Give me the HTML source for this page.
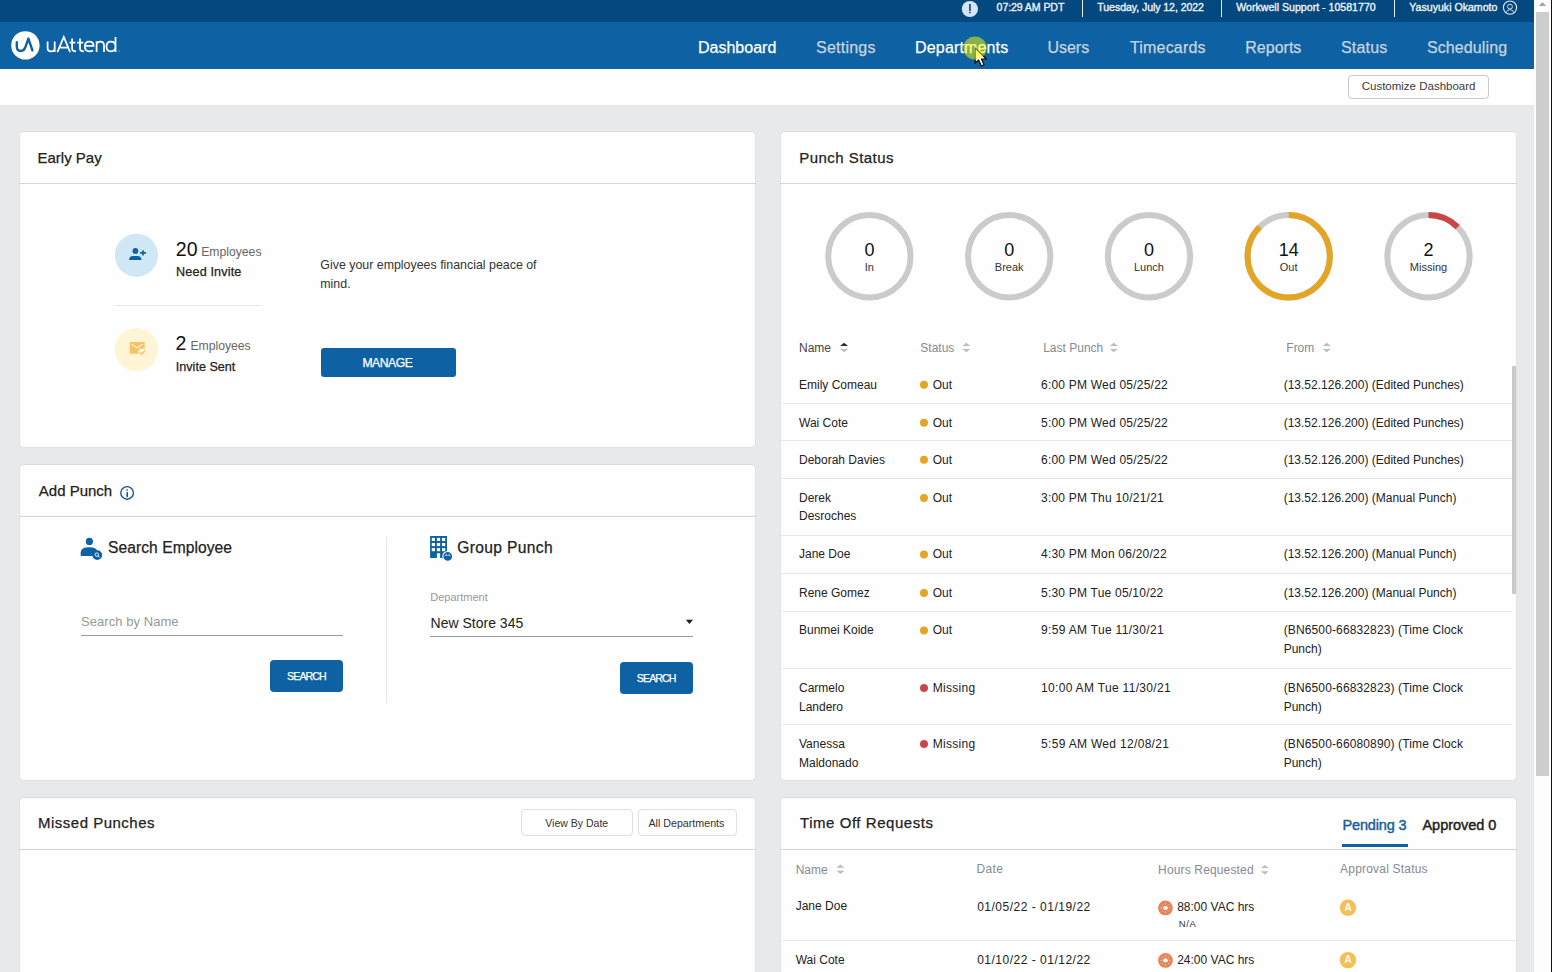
<!DOCTYPE html>
<html><head><meta charset="utf-8"><style>
*{box-sizing:border-box;margin:0;padding:0}
html,body{width:1552px;height:972px;overflow:hidden;background:#e8e9eb;font-family:"Liberation Sans",sans-serif;color:#222}
.t{position:absolute;white-space:nowrap}
.r{position:absolute}
svg{position:absolute;overflow:visible}
.card{position:absolute;background:#fefefe;border:1px solid #e1e2e4;border-top-color:#d9dadc;border-radius:5px}
.sm{-webkit-text-stroke:0.25px currentColor}
.sb{-webkit-text-stroke:0.45px currentColor}
.tbx{-webkit-text-stroke:0.35px currentColor}
</style></head><body>
<div class="r" style="left:0px;top:0px;width:1534px;height:22px;background:#03487e;"></div>
<div class="r" style="left:0px;top:22px;width:1534px;height:47px;background:#0e62a3;"></div>
<div class="r" style="left:0px;top:69px;width:1534px;height:36px;background:#fefefe;"></div>
<svg style="left:0;top:0" width="1" height="1"><circle cx="969.9" cy="9" r="8.1" fill="#d2e6f5"/><rect x="969" y="4" width="1.8" height="7.2" fill="#2b4c96"/><rect x="969" y="12" width="1.8" height="1.3" fill="#2b4c96"/></svg>
<div class="t tbx" style="left:996.60px;top:2.13px;font-size:10.6px;line-height:10.6px;color:#eef2f6;letter-spacing:-0.1px;">07:29 AM PDT</div>
<div class="r" style="left:1082px;top:0px;width:1px;height:17px;background:#e6ecf2;"></div>
<div class="t tbx" style="left:1097.30px;top:2.13px;font-size:10.6px;line-height:10.6px;color:#eef2f6;letter-spacing:-0.08px;">Tuesday, July 12, 2022</div>
<div class="r" style="left:1221px;top:0px;width:1px;height:17px;background:#e6ecf2;"></div>
<div class="t tbx" style="left:1236.30px;top:2.13px;font-size:10.6px;line-height:10.6px;color:#eef2f6;">Workwell Support - 10581770</div>
<div class="r" style="left:1394px;top:0px;width:1px;height:17px;background:#e6ecf2;"></div>
<div class="t tbx" style="left:1409.30px;top:2.13px;font-size:10.6px;line-height:10.6px;color:#eef2f6;">Yasuyuki Okamoto</div>
<svg style="left:0;top:0" width="1" height="1"><circle cx="1510" cy="7.6" r="6.6" fill="none" stroke="#e8eef5" stroke-width="1.1"/><circle cx="1510" cy="6.6" r="2.4" fill="none" stroke="#c9d9e8" stroke-width="1"/><path d="M1506.2 12.6 Q1507 9.6 1510 9.6 Q1513 9.6 1513.8 12.6" fill="none" stroke="#c9d9e8" stroke-width="1"/></svg>
<svg style="left:0;top:0" width="1" height="1"><circle cx="25.4" cy="45.4" r="14.2" fill="#fff"/><path d="M16.8 42.2 V46.6 Q16.8 51 20.8 51 Q24 51 25.4 47.2 L28.4 38.6 L32.4 50.4" fill="none" stroke="#0e62a3" stroke-width="2.4" stroke-linecap="round" stroke-linejoin="round"/></svg>
<svg style="left:0;top:0" width="1" height="1"><g fill="none" stroke="#fff" stroke-width="1.75"><path d="M47.6 41.6 V48.2 Q47.6 51.3 51.1 51.3 Q54.7 51.3 54.7 48.2 V41.6 M54.7 47 V52"/><path d="M57.4 52.1 L63.8 37 L70.1 52.1 M60.3 47.7 H67.3"/><path d="M72.1 38.6 V48.8 Q72.1 51.4 76 51.4 M69.5 42.6 H75.4"/><path d="M80 38.6 V48.8 Q80 51.4 83.9 51.4 M77.2 42.6 H83.3"/><path d="M84.9 45.9 H93.6 Q93.6 41.6 89.2 41.6 Q84.9 41.6 84.9 46.6 Q84.9 51.4 89.4 51.4 Q91.7 51.4 93 50.5"/><path d="M96.6 52.1 V45.5 Q96.6 41.6 100.3 41.6 Q104 41.6 104 45.5 V52.1 M96.6 41.2 V43.5"/><path d="M115.5 36.9 V52.1 M115.5 46.6 Q115.5 41.6 110.9 41.6 Q106.5 41.6 106.5 46.6 Q106.5 51.4 110.9 51.4 Q115.5 51.4 115.5 46.6"/></g><circle cx="119.1" cy="51" r="0.6" fill="#9fbfdf"/></svg>
<div class="t sm" style="left:698.00px;top:39.96px;font-size:16px;line-height:16px;color:#ffffff;">Dashboard</div>
<div class="t sm" style="left:816.10px;top:39.96px;font-size:16px;line-height:16px;color:#c8d4e0;letter-spacing:0.22px;">Settings</div>
<div class="t sm" style="left:915.10px;top:39.96px;font-size:16px;line-height:16px;color:#ffffff;letter-spacing:0.15px;">Departments</div>
<div class="t sm" style="left:1047.40px;top:39.96px;font-size:16px;line-height:16px;color:#c8d4e0;">Users</div>
<div class="t sm" style="left:1129.90px;top:39.96px;font-size:16px;line-height:16px;color:#c8d4e0;letter-spacing:0.2px;">Timecards</div>
<div class="t sm" style="left:1245.30px;top:39.96px;font-size:16px;line-height:16px;color:#c8d4e0;">Reports</div>
<div class="t sm" style="left:1341.00px;top:39.96px;font-size:16px;line-height:16px;color:#c8d4e0;letter-spacing:0.2px;">Status</div>
<div class="t sm" style="left:1427.00px;top:39.96px;font-size:16px;line-height:16px;color:#c8d4e0;letter-spacing:0.1px;">Scheduling</div>
<svg style="left:0;top:0" width="1" height="1"><path d="M975.2 48 L975.2 63.2 L978.6 60 L981.4 66 L984 64.8 L981.4 59 L986.4 59 Z" fill="#fff" stroke="#000" stroke-width="1.1" stroke-linejoin="round"/><circle cx="975" cy="48" r="11.6" fill="#ffff00" fill-opacity="0.5"/></svg>
<div class="r" style="left:1348px;top:75px;width:141px;height:24px;background:#fefefe;border:1px solid #c9c9c9;border-radius:4px;"></div>
<div class="t" style="left:1361.70px;top:81.37px;font-size:11.5px;line-height:11.5px;color:#3a3a3a;">Customize Dashboard</div>
<div class="card" style="left:19px;top:131px;width:737px;height:317px"></div>
<div class="r" style="left:19px;top:183px;width:737px;height:1px;background:#d4d5d7;"></div>
<div class="t sm" style="left:37.50px;top:150.20px;font-size:15px;line-height:15px;color:#222;">Early Pay</div>
<div class="card" style="left:19px;top:464px;width:737px;height:317px"></div>
<div class="r" style="left:19px;top:516px;width:737px;height:1px;background:#d4d5d7;"></div>
<div class="t sm" style="left:38.80px;top:483.40px;font-size:15px;line-height:15px;color:#222;">Add Punch</div>
<div class="card" style="left:19px;top:797px;width:737px;height:200px"></div>
<div class="r" style="left:19px;top:849px;width:737px;height:1px;background:#d4d5d7;"></div>
<div class="t sm" style="left:38.00px;top:815.10px;font-size:15px;line-height:15px;color:#222;letter-spacing:0.5px;">Missed Punches</div>
<div class="card" style="left:780px;top:131px;width:737px;height:650px"></div>
<div class="r" style="left:780px;top:183px;width:737px;height:1px;background:#d4d5d7;"></div>
<div class="t sm" style="left:799.30px;top:150.20px;font-size:15px;line-height:15px;color:#222;letter-spacing:0.45px;">Punch Status</div>
<div class="card" style="left:780px;top:797px;width:737px;height:200px"></div>
<div class="r" style="left:780px;top:849px;width:737px;height:1px;background:#d4d5d7;"></div>
<div class="t sm" style="left:800.00px;top:815.10px;font-size:15px;line-height:15px;color:#222;letter-spacing:0.55px;">Time Off Requests</div>
<svg style="left:0;top:0" width="1" height="1"><circle cx="136.4" cy="255.3" r="21.6" fill="#d0e7f6"/><circle cx="135.4" cy="250.9" r="2.9" fill="#0e62a3"/><path d="M129.2 260 V258.4 Q130 256 133 256 H137.6 Q140.6 256 141.5 259 V260 Z" fill="#0e62a3"/><path d="M143 250.2 V255.6 M140 252.9 H146" stroke="#0e62a3" stroke-width="1.7"/><circle cx="136.4" cy="349.7" r="21.6" fill="#fdf5d6"/><rect x="129.9" y="342" width="14.8" height="11.8" rx="0.5" fill="#f7c369"/><path d="M131.4 344.3 L137.2 347.9 L142.8 344.3" fill="none" stroke="#fdf5d6" stroke-width="1.1"/><circle cx="142.2" cy="352.6" r="4" fill="#fdf5d6"/><path d="M139.6 352.3 L141.2 354.2 L145.1 350.9" fill="none" stroke="#f7c369" stroke-width="1.5"/></svg>
<div class="t" style="left:175.80px;top:240.49px;font-size:19.5px;line-height:19.5px;color:#111;">20</div>
<div class="t" style="left:201.20px;top:245.67px;font-size:12.2px;line-height:12.2px;color:#666;">Employees</div>
<div class="t sm" style="left:176.10px;top:266.43px;font-size:12.6px;line-height:12.6px;color:#222;letter-spacing:0.15px;">Need Invite</div>
<div class="r" style="left:115px;top:305px;width:146px;height:1px;background:#e6e6e6;"></div>
<div class="t" style="left:175.50px;top:333.79px;font-size:19.5px;line-height:19.5px;color:#111;">2</div>
<div class="t" style="left:190.40px;top:339.97px;font-size:12.2px;line-height:12.2px;color:#666;">Employees</div>
<div class="t sm" style="left:175.80px;top:360.63px;font-size:12.6px;line-height:12.6px;color:#222;">Invite Sent</div>
<div class="t" style="left:320.30px;top:259.20px;font-size:12.4px;line-height:12.4px;color:#333;">Give your employees financial peace of</div>
<div class="t" style="left:320.30px;top:278.20px;font-size:12.4px;line-height:12.4px;color:#333;">mind.</div>
<div class="r" style="left:321px;top:348px;width:135px;height:29px;background:#0e62a3;border-radius:3px;"></div>
<div class="t sm" style="left:362.40px;top:356.77px;font-size:12.2px;line-height:12.2px;color:#fff;letter-spacing:-0.45px;">MANAGE</div>
<svg style="left:0;top:0" width="1" height="1"><circle cx="127.1" cy="492.9" r="6.3" fill="none" stroke="#1a5592" stroke-width="1.4"/><rect x="126.4" y="492" width="1.6" height="5.2" rx="0.6" fill="#0f57a0"/><rect x="126.4" y="489.2" width="1.6" height="1.6" rx="0.5" fill="#1a5c9c"/><circle cx="89.4" cy="541.4" r="3.6" fill="#0e62a3"/><path d="M80.7 556 V552.6 Q80.7 547.2 89.1 547.2 Q97.5 547.2 97.5 552.6 V556 Z" fill="#0e62a3"/><circle cx="97.3" cy="555.1" r="4.9" fill="#0e62a3"/><circle cx="96.8" cy="554.6" r="1.7" fill="none" stroke="#fefefe" stroke-width="0.9"/><path d="M98 555.8 L99.7 557.5" stroke="#fefefe" stroke-width="1"/></svg>
<div class="t sm" style="left:108.10px;top:540.49px;font-size:15.6px;line-height:15.6px;color:#222;letter-spacing:0.05px;">Search Employee</div>
<div class="t" style="left:81.10px;top:615.20px;font-size:13px;line-height:13px;color:#999;letter-spacing:0.05px;">Search by Name</div>
<div class="r" style="left:81px;top:635px;width:262px;height:1px;background:#9a9a9a;"></div>
<div class="r" style="left:270px;top:660px;width:73px;height:32px;background:#0e62a3;border-radius:4px;"></div>
<div class="t sm" style="left:287.10px;top:671.03px;font-size:10.6px;line-height:10.6px;color:#fff;letter-spacing:-0.9px;">SEARCH</div>
<div class="r" style="left:386px;top:537px;width:1px;height:166px;background:#e6e6e6;"></div>
<svg style="left:0;top:0" width="1" height="1"><path d="M430.1 536 H447 V557.9 H440.1 V553.3 H436.9 V557.9 H430.1 Z" fill="#0e62a3"/><rect x="431.8" y="537.9" width="3.2" height="3.1" fill="#fefefe"/><rect x="436.9" y="537.9" width="3.2" height="3.1" fill="#fefefe"/><rect x="442.0" y="537.9" width="3.2" height="3.1" fill="#fefefe"/><rect x="431.8" y="543.0" width="3.2" height="3.1" fill="#fefefe"/><rect x="436.9" y="543.0" width="3.2" height="3.1" fill="#fefefe"/><rect x="442.0" y="543.0" width="3.2" height="3.1" fill="#fefefe"/><rect x="431.8" y="548.1" width="3.2" height="3.1" fill="#fefefe"/><rect x="436.9" y="548.1" width="3.2" height="3.1" fill="#fefefe"/><rect x="442.0" y="548.1" width="3.2" height="3.1" fill="#fefefe"/><circle cx="447.7" cy="556.4" r="4.9" fill="#0e62a3" stroke="#fefefe" stroke-width="1.1"/><path d="M444.6 555.6 H450.6" stroke="#9fc0e0" stroke-width="0.9"/><circle cx="446.2" cy="554.2" r="0.7" fill="#b8d0e8"/><circle cx="449.2" cy="554.2" r="0.7" fill="#b8d0e8"/></svg>
<div class="t sm" style="left:457.30px;top:540.39px;font-size:15.6px;line-height:15.6px;color:#222;letter-spacing:0.35px;">Group Punch</div>
<div class="t" style="left:430.30px;top:591.79px;font-size:11px;line-height:11px;color:#999;">Department</div>
<div class="t" style="left:430.60px;top:616.35px;font-size:14px;line-height:14px;color:#222;">New Store 345</div>
<svg style="left:0;top:0" width="1" height="1"><path d="M685.8 619.8 H693 L689.4 623.9 Z" fill="#222"/></svg>
<div class="r" style="left:430px;top:636px;width:263px;height:1px;background:#9a9a9a;"></div>
<div class="r" style="left:620px;top:662px;width:73px;height:32px;background:#0e62a3;border-radius:4px;"></div>
<div class="t sm" style="left:636.80px;top:673.33px;font-size:10.6px;line-height:10.6px;color:#fff;letter-spacing:-0.9px;">SEARCH</div>
<div class="r" style="left:521px;top:809px;width:112px;height:27px;background:#fefefe;border:1px solid #e0e0e0;border-radius:4px;"></div>
<div class="t" style="left:545.30px;top:818.31px;font-size:10.5px;line-height:10.5px;color:#333;">View By Date</div>
<div class="r" style="left:638px;top:809px;width:99px;height:27px;background:#fefefe;border:1px solid #e0e0e0;border-radius:4px;"></div>
<div class="t" style="left:648.40px;top:818.14px;font-size:10.7px;line-height:10.7px;color:#333;">All Departments</div>
<svg style="left:0;top:0" width="1" height="1"><circle cx="869.4" cy="256.3" r="41.2" fill="none" stroke="#cbcbcb" stroke-width="6"/><circle cx="1009.2" cy="256.3" r="41.2" fill="none" stroke="#cbcbcb" stroke-width="6"/><circle cx="1149" cy="256.3" r="41.2" fill="none" stroke="#cbcbcb" stroke-width="6"/><circle cx="1288.7" cy="256.3" r="41.2" fill="none" stroke="#cbcbcb" stroke-width="6"/><circle cx="1288.7" cy="256.3" r="41.2" fill="none" stroke="#e2a526" stroke-width="6" stroke-dasharray="226.51 258.87" transform="rotate(-90 1288.7 256.3)"/><circle cx="1428.5" cy="256.3" r="41.2" fill="none" stroke="#cbcbcb" stroke-width="6"/><circle cx="1428.5" cy="256.3" r="41.2" fill="none" stroke="#c9474b" stroke-width="6" stroke-dasharray="32.36 258.87" transform="rotate(-90 1428.5 256.3)"/></svg>
<div class="t" style="left:829.4px;width:80px;text-align:center;top:241.16px;font-size:18px;line-height:18px;color:#111">0</div>
<div class="t" style="left:829.4px;width:80px;text-align:center;top:261.59px;font-size:11px;line-height:11px;color:#333">In</div>
<div class="t" style="left:969.2px;width:80px;text-align:center;top:241.16px;font-size:18px;line-height:18px;color:#111">0</div>
<div class="t" style="left:969.2px;width:80px;text-align:center;top:261.59px;font-size:11px;line-height:11px;color:#333">Break</div>
<div class="t" style="left:1109px;width:80px;text-align:center;top:241.16px;font-size:18px;line-height:18px;color:#111">0</div>
<div class="t" style="left:1109px;width:80px;text-align:center;top:261.59px;font-size:11px;line-height:11px;color:#333">Lunch</div>
<div class="t" style="left:1248.7px;width:80px;text-align:center;top:241.16px;font-size:18px;line-height:18px;color:#111">14</div>
<div class="t" style="left:1248.7px;width:80px;text-align:center;top:261.59px;font-size:11px;line-height:11px;color:#333">Out</div>
<div class="t" style="left:1388.5px;width:80px;text-align:center;top:241.16px;font-size:18px;line-height:18px;color:#111">2</div>
<div class="t" style="left:1388.5px;width:80px;text-align:center;top:261.59px;font-size:11px;line-height:11px;color:#333">Missing</div>
<div class="t" style="left:799.00px;top:341.74px;font-size:12px;line-height:12px;color:#444;">Name</div>
<svg style="left:0;top:0" width="1" height="1"><path d="M840.10 346.00 L844.10 342.80 L848.10 346.00 Z" fill="#2a2a2a"/><path d="M840.10 349.10 L844.10 352.30 L848.10 349.10 Z" fill="#bdbdbd"/></svg>
<div class="t" style="left:920.30px;top:341.74px;font-size:12px;line-height:12px;color:#878a94;">Status</div>
<svg style="left:0;top:0" width="1" height="1"><path d="M962.40 346.00 L966.40 342.80 L970.40 346.00 Z" fill="#bdbdbd"/><path d="M962.40 349.10 L966.40 352.30 L970.40 349.10 Z" fill="#bdbdbd"/></svg>
<div class="t" style="left:1043.20px;top:341.74px;font-size:12px;line-height:12px;color:#878a94;">Last Punch</div>
<svg style="left:0;top:0" width="1" height="1"><path d="M1109.80 346.00 L1113.80 342.80 L1117.80 346.00 Z" fill="#bdbdbd"/><path d="M1109.80 349.10 L1113.80 352.30 L1117.80 349.10 Z" fill="#bdbdbd"/></svg>
<div class="t" style="left:1286.30px;top:341.74px;font-size:12px;line-height:12px;color:#878a94;">From</div>
<svg style="left:0;top:0" width="1" height="1"><path d="M1322.80 346.00 L1326.80 342.80 L1330.80 346.00 Z" fill="#bdbdbd"/><path d="M1322.80 349.10 L1326.80 352.30 L1330.80 349.10 Z" fill="#bdbdbd"/></svg>
<div class="t" style="left:799.00px;top:378.74px;font-size:12px;line-height:12px;color:#222;">Emily Comeau</div>
<svg style="left:0;top:0" width="1" height="1"><circle cx="924" cy="384.8" r="4" fill="#e2a526"/></svg>
<div class="t" style="left:932.70px;top:378.74px;font-size:12px;line-height:12px;color:#222;">Out</div>
<div class="t" style="left:1041.00px;top:378.74px;font-size:12px;line-height:12px;color:#222;letter-spacing:0.22px;">6:00 PM Wed 05/25/22</div>
<div class="t" style="left:1283.70px;top:378.74px;font-size:12px;line-height:12px;color:#222;">(13.52.126.200) (Edited Punches)</div>
<div class="r" style="left:781px;top:403px;width:731px;height:1px;background:#e8e8e8;"></div>
<div class="t" style="left:799.00px;top:416.74px;font-size:12px;line-height:12px;color:#222;">Wai Cote</div>
<svg style="left:0;top:0" width="1" height="1"><circle cx="924" cy="422.8" r="4" fill="#e2a526"/></svg>
<div class="t" style="left:932.70px;top:416.74px;font-size:12px;line-height:12px;color:#222;">Out</div>
<div class="t" style="left:1041.00px;top:416.74px;font-size:12px;line-height:12px;color:#222;letter-spacing:0.22px;">5:00 PM Wed 05/25/22</div>
<div class="t" style="left:1283.70px;top:416.74px;font-size:12px;line-height:12px;color:#222;">(13.52.126.200) (Edited Punches)</div>
<div class="r" style="left:781px;top:440px;width:731px;height:1px;background:#e8e8e8;"></div>
<div class="t" style="left:799.00px;top:453.74px;font-size:12px;line-height:12px;color:#222;">Deborah Davies</div>
<svg style="left:0;top:0" width="1" height="1"><circle cx="924" cy="459.8" r="4" fill="#e2a526"/></svg>
<div class="t" style="left:932.70px;top:453.74px;font-size:12px;line-height:12px;color:#222;">Out</div>
<div class="t" style="left:1041.00px;top:453.74px;font-size:12px;line-height:12px;color:#222;letter-spacing:0.22px;">6:00 PM Wed 05/25/22</div>
<div class="t" style="left:1283.70px;top:453.74px;font-size:12px;line-height:12px;color:#222;">(13.52.126.200) (Edited Punches)</div>
<div class="r" style="left:781px;top:478px;width:731px;height:1px;background:#e8e8e8;"></div>
<div class="t" style="left:799.00px;top:491.84px;font-size:12px;line-height:12px;color:#222;">Derek</div>
<div class="t" style="left:799.00px;top:510.44px;font-size:12px;line-height:12px;color:#222;">Desroches</div>
<svg style="left:0;top:0" width="1" height="1"><circle cx="924" cy="497.9" r="4" fill="#e2a526"/></svg>
<div class="t" style="left:932.70px;top:491.84px;font-size:12px;line-height:12px;color:#222;">Out</div>
<div class="t" style="left:1041.00px;top:491.84px;font-size:12px;line-height:12px;color:#222;letter-spacing:0.22px;">3:00 PM Thu 10/21/21</div>
<div class="t" style="left:1283.70px;top:491.84px;font-size:12px;line-height:12px;color:#222;">(13.52.126.200) (Manual Punch)</div>
<div class="r" style="left:781px;top:535px;width:731px;height:1px;background:#e8e8e8;"></div>
<div class="t" style="left:799.00px;top:548.44px;font-size:12px;line-height:12px;color:#222;">Jane Doe</div>
<svg style="left:0;top:0" width="1" height="1"><circle cx="924" cy="554.5" r="4" fill="#e2a526"/></svg>
<div class="t" style="left:932.70px;top:548.44px;font-size:12px;line-height:12px;color:#222;">Out</div>
<div class="t" style="left:1041.00px;top:548.44px;font-size:12px;line-height:12px;color:#222;letter-spacing:0.22px;">4:30 PM Mon 06/20/22</div>
<div class="t" style="left:1283.70px;top:548.44px;font-size:12px;line-height:12px;color:#222;">(13.52.126.200) (Manual Punch)</div>
<div class="r" style="left:781px;top:573px;width:731px;height:1px;background:#e8e8e8;"></div>
<div class="t" style="left:799.00px;top:586.84px;font-size:12px;line-height:12px;color:#222;">Rene Gomez</div>
<svg style="left:0;top:0" width="1" height="1"><circle cx="924" cy="592.9" r="4" fill="#e2a526"/></svg>
<div class="t" style="left:932.70px;top:586.84px;font-size:12px;line-height:12px;color:#222;">Out</div>
<div class="t" style="left:1041.00px;top:586.84px;font-size:12px;line-height:12px;color:#222;letter-spacing:0.22px;">5:30 PM Tue 05/10/22</div>
<div class="t" style="left:1283.70px;top:586.84px;font-size:12px;line-height:12px;color:#222;">(13.52.126.200) (Manual Punch)</div>
<div class="r" style="left:781px;top:611px;width:731px;height:1px;background:#e8e8e8;"></div>
<div class="t" style="left:799.00px;top:624.44px;font-size:12px;line-height:12px;color:#222;">Bunmei Koide</div>
<svg style="left:0;top:0" width="1" height="1"><circle cx="924" cy="630.5" r="4" fill="#e2a526"/></svg>
<div class="t" style="left:932.70px;top:624.44px;font-size:12px;line-height:12px;color:#222;">Out</div>
<div class="t" style="left:1041.00px;top:624.44px;font-size:12px;line-height:12px;color:#222;letter-spacing:0.32px;">9:59 AM Tue 11/30/21</div>
<div class="t" style="left:1283.70px;top:624.44px;font-size:12px;line-height:12px;color:#222;letter-spacing:0.13px;">(BN6500-66832823) (Time Clock</div>
<div class="t" style="left:1283.70px;top:643.04px;font-size:12px;line-height:12px;color:#222;">Punch)</div>
<div class="r" style="left:781px;top:668px;width:731px;height:1px;background:#e8e8e8;"></div>
<div class="t" style="left:799.00px;top:681.94px;font-size:12px;line-height:12px;color:#222;">Carmelo</div>
<div class="t" style="left:799.00px;top:700.54px;font-size:12px;line-height:12px;color:#222;">Landero</div>
<svg style="left:0;top:0" width="1" height="1"><circle cx="924" cy="688.0" r="4" fill="#c9474b"/></svg>
<div class="t" style="left:932.70px;top:681.94px;font-size:12px;line-height:12px;color:#222;letter-spacing:0.3px;">Missing</div>
<div class="t" style="left:1041.00px;top:681.94px;font-size:12px;line-height:12px;color:#222;letter-spacing:0.32px;">10:00 AM Tue 11/30/21</div>
<div class="t" style="left:1283.70px;top:681.94px;font-size:12px;line-height:12px;color:#222;letter-spacing:0.13px;">(BN6500-66832823) (Time Clock</div>
<div class="t" style="left:1283.70px;top:700.54px;font-size:12px;line-height:12px;color:#222;">Punch)</div>
<div class="r" style="left:781px;top:724px;width:731px;height:1px;background:#e8e8e8;"></div>
<div class="t" style="left:799.00px;top:737.94px;font-size:12px;line-height:12px;color:#222;">Vanessa</div>
<div class="t" style="left:799.00px;top:756.54px;font-size:12px;line-height:12px;color:#222;">Maldonado</div>
<svg style="left:0;top:0" width="1" height="1"><circle cx="924" cy="744.0" r="4" fill="#c9474b"/></svg>
<div class="t" style="left:932.70px;top:737.94px;font-size:12px;line-height:12px;color:#222;letter-spacing:0.3px;">Missing</div>
<div class="t" style="left:1041.00px;top:737.94px;font-size:12px;line-height:12px;color:#222;letter-spacing:0.32px;">5:59 AM Wed 12/08/21</div>
<div class="t" style="left:1283.70px;top:737.94px;font-size:12px;line-height:12px;color:#222;letter-spacing:0.13px;">(BN6500-66080890) (Time Clock</div>
<div class="t" style="left:1283.70px;top:756.54px;font-size:12px;line-height:12px;color:#222;">Punch)</div>
<div class="r" style="left:1512px;top:366px;width:4px;height:228px;background:#c9c9c9;border-radius:1px;"></div>
<div class="t sb" style="left:1342.50px;top:818.03px;font-size:14.5px;line-height:14.5px;color:#1b5e9e;letter-spacing:-0.15px;">Pending 3</div>
<div class="r" style="left:1342px;top:844px;width:66px;height:3px;background:#0e62a3;"></div>
<div class="t sb" style="left:1422.50px;top:818.03px;font-size:14.5px;line-height:14.5px;color:#222;letter-spacing:-0.05px;">Approved 0</div>
<div class="t" style="left:795.70px;top:863.64px;font-size:12px;line-height:12px;color:#878a94;">Name</div>
<svg style="left:0;top:0" width="1" height="1"><path d="M836.40 867.70 L840.40 864.50 L844.40 867.70 Z" fill="#bdbdbd"/><path d="M836.40 870.80 L840.40 874.00 L844.40 870.80 Z" fill="#bdbdbd"/></svg>
<div class="t" style="left:976.60px;top:862.74px;font-size:12px;line-height:12px;color:#878a94;letter-spacing:0.3px;">Date</div>
<div class="t" style="left:1158.10px;top:864.04px;font-size:12px;line-height:12px;color:#878a94;letter-spacing:0.15px;">Hours Requested</div>
<svg style="left:0;top:0" width="1" height="1"><path d="M1260.80 868.10 L1264.80 864.90 L1268.80 868.10 Z" fill="#bdbdbd"/><path d="M1260.80 871.20 L1264.80 874.40 L1268.80 871.20 Z" fill="#bdbdbd"/></svg>
<div class="t" style="left:1340.10px;top:862.74px;font-size:12px;line-height:12px;color:#878a94;letter-spacing:0.2px;">Approval Status</div>
<svg style="left:0;top:0" width="1" height="1"><circle cx="1165.45" cy="907.9" r="7.4" fill="#e4855c"/><ellipse cx="1165.45" cy="907.9" rx="2.3" ry="1.9" fill="#fff"/><line x1="1169.15" y1="907.90" x2="1170.55" y2="907.90" stroke="#f6d2c2" stroke-width="0.8"/><line x1="1168.07" y1="910.52" x2="1169.06" y2="911.51" stroke="#f6d2c2" stroke-width="0.8"/><line x1="1165.45" y1="911.60" x2="1165.45" y2="913.00" stroke="#f6d2c2" stroke-width="0.8"/><line x1="1162.83" y1="910.52" x2="1161.84" y2="911.51" stroke="#f6d2c2" stroke-width="0.8"/><line x1="1161.75" y1="907.90" x2="1160.35" y2="907.90" stroke="#f6d2c2" stroke-width="0.8"/><line x1="1162.83" y1="905.28" x2="1161.84" y2="904.29" stroke="#f6d2c2" stroke-width="0.8"/><line x1="1165.45" y1="904.20" x2="1165.45" y2="902.80" stroke="#f6d2c2" stroke-width="0.8"/><line x1="1168.07" y1="905.28" x2="1169.06" y2="904.29" stroke="#f6d2c2" stroke-width="0.8"/><circle cx="1165.45" cy="960.4" r="7.4" fill="#e4855c"/><ellipse cx="1165.45" cy="960.4" rx="2.3" ry="1.9" fill="#fff"/><line x1="1169.15" y1="960.40" x2="1170.55" y2="960.40" stroke="#f6d2c2" stroke-width="0.8"/><line x1="1168.07" y1="963.02" x2="1169.06" y2="964.01" stroke="#f6d2c2" stroke-width="0.8"/><line x1="1165.45" y1="964.10" x2="1165.45" y2="965.50" stroke="#f6d2c2" stroke-width="0.8"/><line x1="1162.83" y1="963.02" x2="1161.84" y2="964.01" stroke="#f6d2c2" stroke-width="0.8"/><line x1="1161.75" y1="960.40" x2="1160.35" y2="960.40" stroke="#f6d2c2" stroke-width="0.8"/><line x1="1162.83" y1="957.78" x2="1161.84" y2="956.79" stroke="#f6d2c2" stroke-width="0.8"/><line x1="1165.45" y1="956.70" x2="1165.45" y2="955.30" stroke="#f6d2c2" stroke-width="0.8"/><line x1="1168.07" y1="957.78" x2="1169.06" y2="956.79" stroke="#f6d2c2" stroke-width="0.8"/><circle cx="1348" cy="907.7" r="8.2" fill="#f7be55"/><circle cx="1348" cy="960.1" r="8.2" fill="#f7be55"/></svg>
<div class="t" style="left:1340px;width:16px;text-align:center;top:903.03px;font-size:10px;line-height:10px;color:#fff;font-weight:bold">A</div>
<div class="t" style="left:1340px;width:16px;text-align:center;top:955.43px;font-size:10px;line-height:10px;color:#fff;font-weight:bold">A</div>
<div class="t" style="left:795.70px;top:900.44px;font-size:12px;line-height:12px;color:#222;">Jane Doe</div>
<div class="t" style="left:977.20px;top:901.04px;font-size:12px;line-height:12px;color:#222;letter-spacing:0.5px;">01/05/22 - 01/19/22</div>
<div class="t" style="left:1177.20px;top:900.94px;font-size:12px;line-height:12px;color:#222;">88:00 VAC hrs</div>
<div class="t" style="left:1178.70px;top:918.96px;font-size:9.5px;line-height:9.5px;color:#333;letter-spacing:0.6px;">N/A</div>
<div class="r" style="left:781px;top:940px;width:735px;height:1px;background:#e8e8e8;"></div>
<div class="t" style="left:795.70px;top:953.84px;font-size:12px;line-height:12px;color:#222;">Wai Cote</div>
<div class="t" style="left:977.20px;top:954.44px;font-size:12px;line-height:12px;color:#222;letter-spacing:0.5px;">01/10/22 - 01/12/22</div>
<div class="t" style="left:1177.20px;top:953.84px;font-size:12px;line-height:12px;color:#222;">24:00 VAC hrs</div>
<div class="r" style="left:1534px;top:0px;width:18px;height:972px;background:#fdfdfd;"></div>
<div class="r" style="left:1536px;top:12px;width:13px;height:764px;background:#cdcdcd;"></div>
<svg style="left:0;top:0" width="1" height="1"><path d="M1538.9 6 L1542.5 1.9 L1546.1 6 Z" fill="#a99da4"/></svg>
<div class="r" style="left:1551px;top:0px;width:1px;height:972px;background:#111;"></div>
</body></html>
